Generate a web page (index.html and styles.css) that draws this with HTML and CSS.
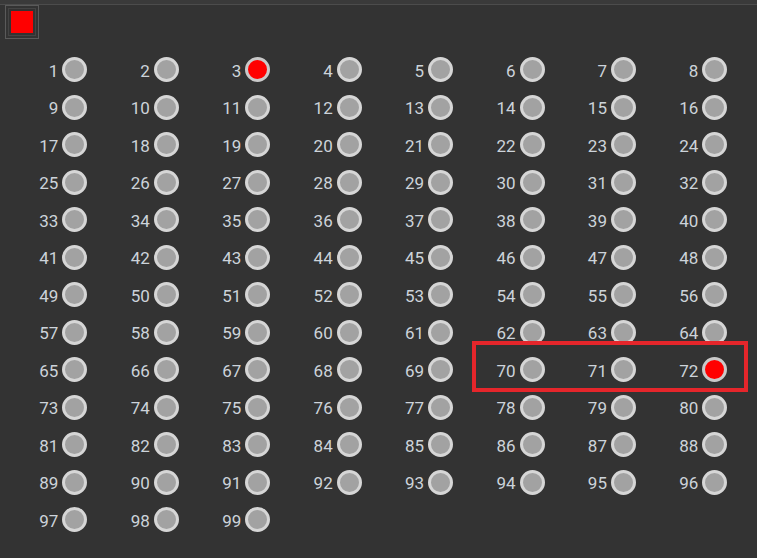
FILE: index.html
```html
<!DOCTYPE html>
<html lang="en">
<head>
  <meta charset="UTF-8" />
  <title>Channel Monitor</title>
  <link rel="stylesheet" href="styles.css">
</head>
<body>
  <div class="topbar"></div>
  <div class="toolbar">
    <div class="swatch"><div class="swatch-fill"></div></div>
  </div>
  <div class="panel">
    <div class="grid" id="grid"></div>
    <div class="highlight"></div>
  </div>

  <script>
    // build the 99 channel indicators
    const grid = document.getElementById("grid");
    const active = [3, 72];
    const order = [];
    for (let i = 1; i <= 64; i++) order.push(i);
    for (let i = 65; i <= 99; i++) order.push(i);

    order.forEach(function (n) {
      const cell = document.createElement("div");
      cell.className = "cell";
      const label = document.createElement("span");
      label.className = "num";
      label.textContent = n;
      const led = document.createElement("span");
      led.className = active.includes(n) ? "led on" : "led";
      cell.appendChild(label);
      cell.appendChild(led);
      grid.appendChild(cell);
    });
  </script>
</body>
</html>
```

FILE: styles.css
```css
body {
  margin: 0;
  background: #333333;
  font-family: Roboto, "Liberation Sans", sans-serif;
  width: 757px;
  height: 558px;
  overflow: hidden;
}

.topbar {
  height: 4px;
  background: #3a3a3a;
  border-bottom: 1px solid #4c4c4c;
}

.toolbar {
  padding: 0 0 0 5px;
  height: 34px;
}

.swatch {
  width: 34px;
  height: 34px;
  box-sizing: border-box;
  border: 1px solid #5a5a5a;
  padding: 2px;
}

.swatch-fill {
  width: 28px;
  height: 28px;
  box-sizing: border-box;
  border: 1px solid #444444;
  padding: 2px;
}

.swatch-fill::before {
  content: "";
  display: block;
  width: 22px;
  height: 22px;
  background: #ff0000;
}

.panel {
  position: relative;
  margin-top: 12px;
}

.grid {
  display: grid;
  grid-template-columns: repeat(8, 91.43px);
  grid-auto-rows: 37.5px;
}

.cell {
  display: flex;
  align-items: center;
  justify-content: flex-end;
  padding-right: 4px;
  gap: 4px;
}

.num {
  color: #cdd3da;
  font-size: 17px;
  line-height: 1;
  padding-top: 3px;
}

.led {
  width: 25px;
  height: 25px;
  box-sizing: border-box;
  border-radius: 50%;
  border: 3px solid #d6d6d6;
  background: #a2a2a2;
}

.led.on {
  background: #ff0000;
  border-color: #c9c9c9;
}

.highlight {
  position: absolute;
  left: 472px;
  top: 290px;
  width: 276px;
  height: 51px;
  box-sizing: border-box;
  border: 4px solid #e5262b;
}
```
